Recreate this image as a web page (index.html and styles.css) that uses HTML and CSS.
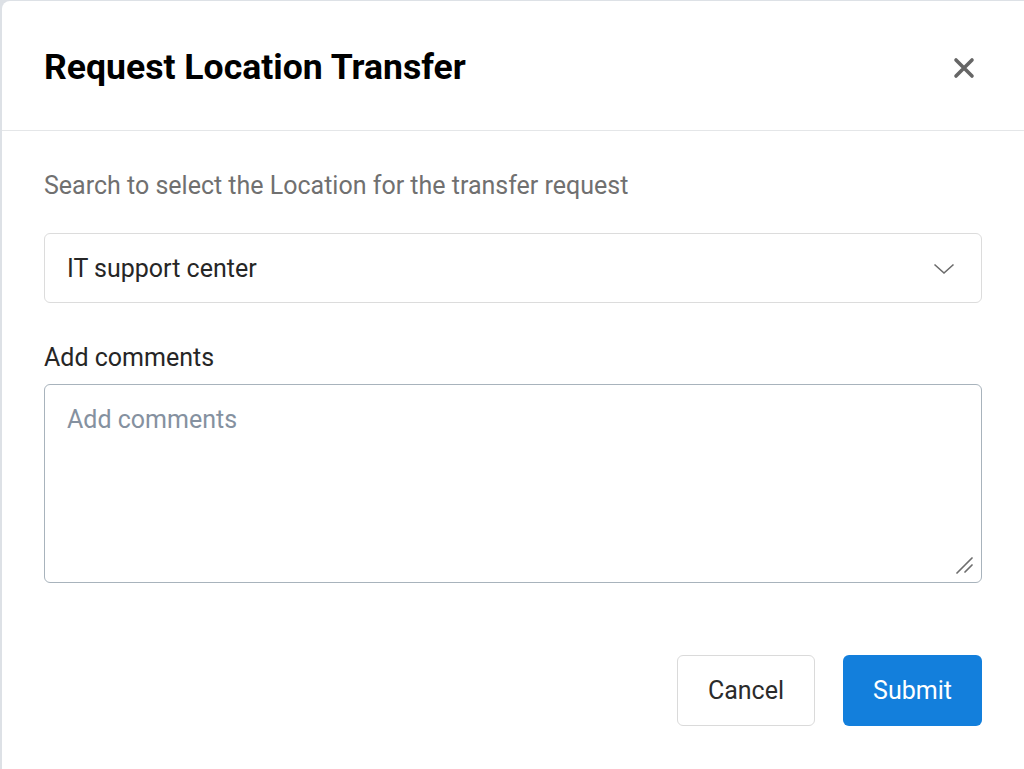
FILE: index.html
```html
<!DOCTYPE html>
<html lang="en">
<head>
<meta charset="utf-8">
<title>Request Location Transfer</title>
<link rel="stylesheet" href="styles.css">
</head>
<body>
<div class="modal">
  <header class="modal-header">
    <h1 class="modal-title">Request Location Transfer</h1>
    <button class="close" aria-label="Close">
      <svg width="22" height="22" viewBox="0 0 22 22"><path d="M3 3 L19 19 M19 3 L3 19" stroke="#666" stroke-width="3.6" stroke-linecap="round" fill="none"/></svg>
    </button>
  </header>
  <div class="modal-body">
    <p class="hint">Search to select the Location for the transfer request</p>
    <div class="select">
      <span class="select-value">IT support center</span>
      <svg class="chevron" width="22" height="12" viewBox="0 0 22 12"><path d="M1.5 1.5 L11 10 L20.5 1.5" stroke="#6b6b6b" stroke-width="1.6" fill="none"/></svg>
    </div>
    <label class="label" for="comments">Add comments</label>
    <div class="textarea-wrap">
      <textarea id="comments" class="textarea" placeholder="Add comments"></textarea>
      <svg class="grip" width="18" height="18" viewBox="0 0 18 18"><path d="M16 1 L1 16 M16 8 L9 15" stroke="#6e6e6e" stroke-width="1.7" stroke-linecap="round" fill="none"/></svg>
    </div>
    <div class="actions">
      <button class="btn btn-cancel">Cancel</button>
      <button class="btn btn-submit">Submit</button>
    </div>
  </div>
</div>
</body>
</html>
```

FILE: styles.css
```css
* { box-sizing: border-box; }
html, body { height: 100%; }
body {
  margin: 0;
  background: #dde1e6;
  font-family: Roboto, "Noto Sans", "Liberation Sans", sans-serif;
  overflow: hidden;
}
.modal {
  margin: 1px 0 0 2px;
  height: calc(100% - 1px);
  background: #fff;
  border-top-left-radius: 8px;
  display: flex;
  flex-direction: column;
}
.modal-header {
  height: 130px;
  flex: none;
  display: flex;
  align-items: center;
  justify-content: space-between;
  padding: 0 49px 0 42px;
  border-bottom: 1px solid #e4e6e8;
}
.modal-title {
  margin: 0;
  font-size: 35.6px;
  font-weight: 700;
  color: #000;
  padding-top: 2px;
}
.close {
  border: 0;
  background: none;
  padding: 0;
  width: 22px;
  height: 22px;
  margin-top: 4px;
  cursor: pointer;
  display: flex;
}
.modal-body {
  padding: 40px 42px 0 42px;
  display: flex;
  flex-direction: column;
}
.hint {
  margin: 0 0 32px;
  font-size: 25px;
  line-height: 30px;
  color: #707070;
}
.select {
  height: 70px;
  border: 1.5px solid #dcdcdc;
  border-radius: 6px;
  display: flex;
  align-items: center;
  justify-content: space-between;
  padding: 0 26px 0 22px;
}
.select-value {
  font-size: 25px;
  color: #262626;
}
.chevron { margin-top: 2px; }
.label {
  margin-top: 39px;
  font-size: 25px;
  line-height: 30px;
  color: #262626;
  padding-top: 1px;
}
.textarea-wrap {
  position: relative;
  margin-top: 11px;
  height: 199px;
}
.textarea {
  display: block;
  width: 100%;
  height: 100%;
  border: 1.5px solid #a8b3bc;
  border-radius: 6px;
  padding: 20px 22px;
  font-family: inherit;
  font-size: 25px;
  color: #262626;
  resize: none;
  outline: none;
}
.textarea::placeholder { color: #8591a0; }
.grip {
  position: absolute;
  right: 8px;
  bottom: 8px;
}
.actions {
  margin-top: 72px;
  display: flex;
  justify-content: flex-end;
  gap: 28px;
}
.btn {
  height: 71px;
  border-radius: 6px;
  font-family: inherit;
  font-size: 25px;
  cursor: pointer;
}
.btn-cancel {
  width: 138px;
  background: #fff;
  border: 1.5px solid #dadada;
  color: #2b2b2b;
}
.btn-submit {
  width: 139px;
  background: #137fdc;
  border: 0;
  color: #fff;
}
```
